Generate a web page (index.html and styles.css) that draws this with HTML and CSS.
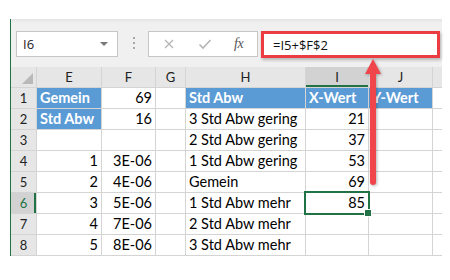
FILE: index.html
```html
<!DOCTYPE html>
<html lang="de">
<head>
  <meta charset="UTF-8">
  <title>Standardabweichung</title>
  <link rel="stylesheet" href="styles.css">
</head>
<body>
  <div class="window">
    <!-- Formula bar -->
    <div class="toolbar">
      <div class="name-box">
        <span>I6</span>
        <span class="caret"></span>
      </div>
      <div class="dots"><i></i><i></i><i></i></div>
      <div class="buttons">
        <svg class="btn-icon" width="12" height="12" viewBox="0 0 12 12"><path d="M2 2 L10 10 M10 2 L2 10" stroke="#b5b5b5" stroke-width="1.3" fill="none"/></svg>
        <svg class="btn-icon" width="14" height="12" viewBox="0 0 14 12"><path d="M1.5 6.5 L5 10 L12.5 2" stroke="#b5b5b5" stroke-width="1.6" fill="none"/></svg>
        <span class="fx">fx</span>
      </div>
      <div class="formula">=I5+$F$2</div>
    </div>

    <!-- Sheet -->
    <div class="sheet">
      <div class="hdr corner"></div>
      <div class="hdr">E</div>
      <div class="hdr">F</div>
      <div class="hdr">G</div>
      <div class="hdr">H</div>
      <div class="hdr col-sel">I</div>
      <div class="hdr">J</div>
      <div class="hdr"></div>

      <div class="hdr row">1</div>
      <div class="cell blue">Gemein</div>
      <div class="cell num">69</div>
      <div class="cell"></div>
      <div class="cell blue">Std Abw</div>
      <div class="cell blue">X-Wert</div>
      <div class="cell blue">Y-Wert</div>
      <div class="cell"></div>

      <div class="hdr row">2</div>
      <div class="cell blue">Std Abw</div>
      <div class="cell num">16</div>
      <div class="cell"></div>
      <div class="cell">3 Std Abw gering</div>
      <div class="cell num">21</div>
      <div class="cell"></div>
      <div class="cell"></div>

      <div class="hdr row">3</div>
      <div class="cell"></div>
      <div class="cell"></div>
      <div class="cell"></div>
      <div class="cell">2 Std Abw gering</div>
      <div class="cell num">37</div>
      <div class="cell"></div>
      <div class="cell"></div>

      <div class="hdr row">4</div>
      <div class="cell num">1</div>
      <div class="cell num">3E-06</div>
      <div class="cell"></div>
      <div class="cell">1 Std Abw gering</div>
      <div class="cell num">53</div>
      <div class="cell"></div>
      <div class="cell"></div>

      <div class="hdr row">5</div>
      <div class="cell num">2</div>
      <div class="cell num">4E-06</div>
      <div class="cell"></div>
      <div class="cell">Gemein</div>
      <div class="cell num">69</div>
      <div class="cell"></div>
      <div class="cell"></div>

      <div class="hdr row row-sel">6</div>
      <div class="cell num">3</div>
      <div class="cell num">5E-06</div>
      <div class="cell"></div>
      <div class="cell">1 Std Abw mehr</div>
      <div class="cell num active">85</div>
      <div class="cell"></div>
      <div class="cell"></div>

      <div class="hdr row">7</div>
      <div class="cell num">4</div>
      <div class="cell num">7E-06</div>
      <div class="cell"></div>
      <div class="cell">2 Std Abw mehr</div>
      <div class="cell"></div>
      <div class="cell"></div>
      <div class="cell"></div>

      <div class="hdr row">8</div>
      <div class="cell num">5</div>
      <div class="cell num">8E-06</div>
      <div class="cell"></div>
      <div class="cell">3 Std Abw mehr</div>
      <div class="cell"></div>
      <div class="cell"></div>
      <div class="cell"></div>
    </div>
  </div>

  <!-- Callout arrow pointing at the formula -->
  <svg class="arrow" width="24" height="132" viewBox="0 0 24 132">
    <path d="M9 12 H15 V124 Q15 127 12 127 Q9 127 9 124 Z" fill="#f0464b"/>
    <path d="M12 1 L20 16 L4 16 Z" fill="#f0464b"/>
  </svg>
</body>
</html>
```

FILE: styles.css
```css
/* General */
* {
  margin: 0;
  padding: 0;
  box-sizing: border-box;
}

body {
  background: #ffffff;
  font-family: 'Lato', 'Liberation Sans', sans-serif;
  color: #000;
  position: relative;
  width: 450px;
  height: 280px;
  overflow: hidden;
}

.window {
  margin: 19px 0 0 10px;
  width: 432px;
  border-left: 1px solid #217346;
}

/* Formula bar */
.toolbar {
  height: 48px;
  display: flex;
  align-items: flex-start;
  padding: 12px 0 0 5px;
  background: linear-gradient(#e4e4e4, #f0f0f0 4px, #f0f0f0);
}

.name-box {
  width: 102px;
  height: 26px;
  background: #fff;
  border: 1px solid #c6c6c6;
  display: flex;
  align-items: center;
  justify-content: space-between;
  padding: 0 9px 0 6px;
  font-family: 'Open Sans', sans-serif;
  font-size: 13px;
  color: #222;
}

.caret {
  width: 0;
  height: 0;
  border-left: 4px solid transparent;
  border-right: 4px solid transparent;
  border-top: 4px solid #777;
}

.dots {
  width: 2px;
  margin: 6px 13px 0 15px;
  display: flex;
  flex-direction: column;
  gap: 3px;
}

.dots i {
  width: 2px;
  height: 2px;
  background: #a8a8a8;
}

.buttons {
  width: 110px;
  height: 26px;
  background: #fff;
  border: 1px solid #c6c6c6;
  display: flex;
  align-items: center;
  padding-left: 14px;
  gap: 23px;
}

.fx {
  font-family: 'Liberation Serif', serif;
  font-style: italic;
  font-size: 14px;
  color: #555;
  margin-left: -1px;
  letter-spacing: -0.5px;
}

.formula {
  width: 179px;
  height: 27px;
  margin-left: 3px;
  background: #fff;
  border: 3px solid #ea3c41;
  box-shadow: 1px 2px 3px rgba(0, 0, 0, 0.25);
  padding: 1px 0 0 9px;
  font-family: 'Open Sans', sans-serif;
  font-size: 13px;
  line-height: 20px;
  color: #111;
}

/* Sheet grid */
.sheet {
  display: grid;
  grid-template-columns: 25px 64px 53px 29px 119px 62px 63px 9px;
  grid-template-rows: repeat(9, 20px);
  gap: 1px;
  padding-bottom: 1px;
  background: #d4d4d4;
}

.hdr {
  background: #e6e6e6;
  font-size: 13px;
  color: #222;
  display: flex;
  align-items: center;
  justify-content: center;
}

.corner {
  position: relative;
}

.corner::after {
  content: "";
  position: absolute;
  right: 3px;
  bottom: 3px;
  border-left: 11px solid transparent;
  border-bottom: 11px solid #b9b9b9;
}

.col-sel {
  background: #d2d2d2;
  box-shadow: inset 0 -2px 0 #217346;
}

.row-sel {
  background: #d2d2d2;
  color: #217346;
  box-shadow: inset -2px 0 0 #217346;
}

.cell {
  background: #fff;
  font-size: 14.5px;
  line-height: 20px;
  padding: 0 3px;
  white-space: nowrap;
  overflow: hidden;
}

.num {
  text-align: right;
}

.blue {
  background: #5b9bd5;
  color: #fff;
  font-weight: 700;
}

.active {
  position: relative;
  overflow: visible;
}

.active::before {
  content: "";
  position: absolute;
  top: -2px;
  left: -2px;
  right: -2px;
  bottom: -2px;
  border: 2px solid #217346;
}

.active::after {
  content: "";
  position: absolute;
  right: -4px;
  bottom: -4px;
  width: 6px;
  height: 6px;
  background: #217346;
  border: 1px solid #fff;
}

/* Callout arrow */
.arrow {
  position: absolute;
  left: 361px;
  top: 58px;
  filter: drop-shadow(1px 1px 1.5px rgba(0, 0, 0, 0.3));
}
```
